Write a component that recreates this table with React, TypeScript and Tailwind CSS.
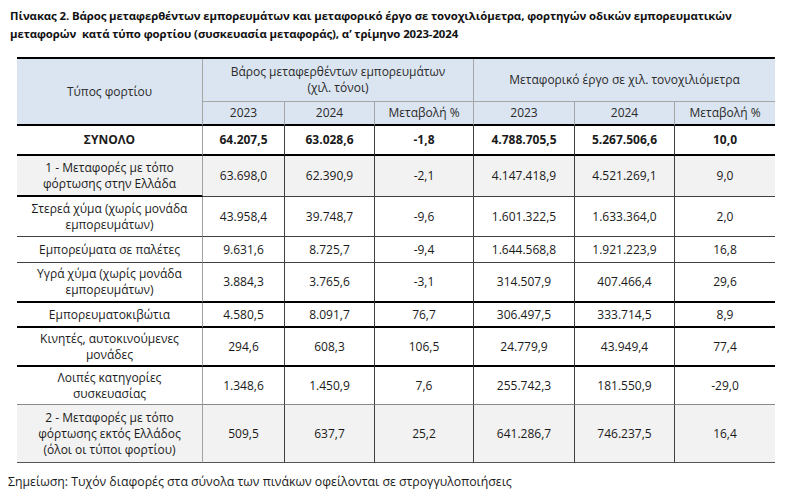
import React from "react";

type Row = {
  label: string[];
  vals: string[];
  bold?: boolean;
  gray?: boolean;
  bottom: string;
  firstBottom?: string;
};

const rows: Row[] = [
  { label: ["ΣΥΝΟΛΟ"], vals: ["64.207,5", "63.028,6", "-1,8", "4.788.705,5", "5.267.506,6", "10,0"], bold: true, bottom: "border-b-2 border-b-black" },
  { label: ["1 - Μεταφορές με τόπο", "φόρτωσης στην Ελλάδα"], vals: ["63.698,0", "62.390,9", "-2,1", "4.147.418,9", "4.521.269,1", "9,0"], gray: true, bottom: "border-b border-b-[#404040]", firstBottom: "border-b-2 border-b-black" },
  { label: ["Στερεά χύμα (χωρίς μονάδα", "εμπορευμάτων)"], vals: ["43.958,4", "39.748,7", "-9,6", "1.601.322,5", "1.633.364,0", "2,0"], bottom: "border-b border-b-[#404040]" },
  { label: ["Εμπορεύματα σε παλέτες"], vals: ["9.631,6", "8.725,7", "-9,4", "1.644.568,8", "1.921.223,9", "16,8"], bottom: "border-b border-b-[#404040]" },
  { label: ["Υγρά χύμα (χωρίς μονάδα", "εμπορευμάτων)"], vals: ["3.884,3", "3.765,6", "-3,1", "314.507,9", "407.466,4", "29,6"], bottom: "border-b-2 border-b-black" },
  { label: ["Εμπορευματοκιβώτια"], vals: ["4.580,5", "8.091,7", "76,7", "306.497,5", "333.714,5", "8,9"], bottom: "border-b-2 border-b-black" },
  { label: ["Κινητές, αυτοκινούμενες", "μονάδες"], vals: ["294,6", "608,3", "106,5", "24.779,9", "43.949,4", "77,4"], bottom: "border-b-2 border-b-black" },
  { label: ["Λοιπές κατηγορίες", "συσκευασίας"], vals: ["1.348,6", "1.450,9", "7,6", "255.742,3", "181.550,9", "-29,0"], bottom: "border-b border-b-[#8a8a8a]" },
  { label: ["2 - Μεταφορές με τόπο", "φόρτωσης εκτός Ελλάδος", "(όλοι οι τύποι φορτίου)"], vals: ["509,5", "637,7", "25,2", "641.286,7", "746.237,5", "16,4"], gray: true, bottom: "border-b border-b-[#555555]" },
];

export default function App() {
  return (
    <div
      className="w-[788px] h-[493px] bg-white text-[#1a1a1a] overflow-hidden"
      style={{ fontFamily: '"Open Sans", "Noto Sans", sans-serif' }}
    >
      <div className="pl-[10px] pt-[7px] text-[11.4px] leading-[18px] font-bold text-[#111] tracking-[-0.1px]">
        <div>Πίνακας 2. Βάρος μεταφερθέντων εμπορευμάτων και μεταφορικό έργο σε τονοχιλιόμετρα, φορτηγών οδικών εμπορευματικών</div>
        <div>μεταφορών&nbsp; κατά τύπο φορτίου (συσκευασία μεταφοράς), α’ τρίμηνο 2023-2024</div>
      </div>

      <div className="ml-[17px] mt-[14px] w-[758px] grid grid-cols-[186px_82px_90px_99px_101px_100px_100px] grid-rows-[43px_24px_30px_41px_40px_26px_40px_25px_39px_38px_58px] border-t-2 border-t-black border-r border-r-[#404040] text-[12px] leading-[16px]">
        {/* header */}
        <div className="row-span-2 bg-[#dbe5f1] border-b-2 border-b-black border-r border-r-[#a6a6a6] flex items-center justify-center text-[#2a2a2a]">
          Τύπος φορτίου
        </div>
        <div className="col-span-3 bg-[#dbe5f1] border-b border-b-[#a6a6a6] border-r border-r-[#a6a6a6] flex flex-col items-center justify-center text-center text-[#2a2a2a]">
          <span>Βάρος μεταφερθέντων εμπορευμάτων</span>
          <span>(χιλ. τόνοι)</span>
        </div>
        <div className="col-span-3 bg-[#dbe5f1] border-b border-b-[#a6a6a6] flex items-center justify-center text-[#2a2a2a]">
          Μεταφορικό έργο σε χιλ. τονοχιλιόμετρα
        </div>
        {["2023", "2024", "Μεταβολή %", "2023", "2024", "Μεταβολή %"].map((t, i) => (
          <div
            key={i}
            className={`bg-[#dbe5f1] border-b-2 border-b-black flex items-center justify-center text-[#2a2a2a] ${i < 5 ? "border-r border-r-[#a6a6a6]" : ""}`}
          >
            {t}
          </div>
        ))}

        {rows.map((r, ri) => (
          <React.Fragment key={ri}>
            <div
              className={`${r.firstBottom ?? r.bottom} border-r border-r-[#a0a0a0] flex flex-col items-center justify-center text-center ${r.gray ? "bg-[#f2f2f2]" : "bg-white"} ${r.bold ? "font-bold" : ""}`}
            >
              {r.label.map((l, li) => (
                <span key={li}>{l}</span>
              ))}
            </div>
            {r.vals.map((v, vi) => (
              <div
                key={vi}
                className={`${r.bottom} ${vi < 5 ? "border-r border-r-[#404040]" : ""} flex items-center justify-center ${r.gray ? "bg-[#f2f2f2]" : "bg-white"} ${r.bold ? "font-bold" : ""}`}
              >
                {v}
              </div>
            ))}
          </React.Fragment>
        ))}
      </div>

      <div className="pl-[8px] pt-[11px] text-[12.3px] leading-[16px] text-[#1a1a1a]">
        Σημείωση: Τυχόν διαφορές στα σύνολα των πινάκων οφείλονται σε στρογγυλοποιήσεις
      </div>
    </div>
  );
}
